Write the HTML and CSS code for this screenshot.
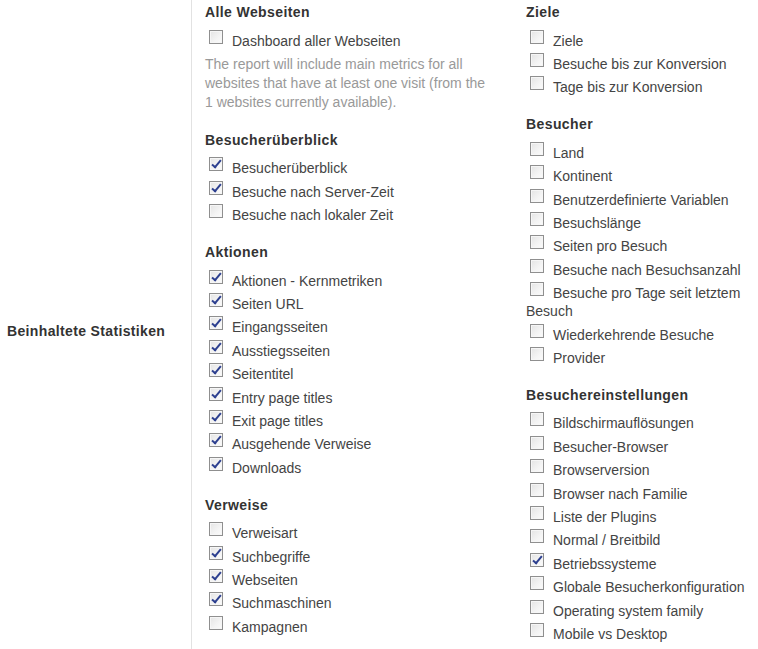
FILE: index.html
```
<!DOCTYPE html>
<html lang="de">
 <head>
  <meta charset="UTF-8" />
  <meta name="viewport" content="width=device-width, initial-scale=1.0" />
  <title>Beinhaltete Statistiken</title>
  <link rel="stylesheet" href="styles.css">
 </head>
 <body>
  <div class="report-row">
   <div class="row-label">Beinhaltete Statistiken</div>
   <div class="row-content">
    <!-- left column -->
    <div class="stats-col">
     <div class="group">
      <h3>Alle Webseiten</h3>
      <label class="item"><span class="box"></span>Dashboard aller Webseiten</label>
      <p class="hint">The report will include main metrics for all websites that have at least one visit (from the 1 websites currently available).</p>
     </div>
     <div class="group">
      <h3>Besucherüberblick</h3>
      <label class="item"><span class="box checked"></span>Besucherüberblick</label>
      <label class="item"><span class="box checked"></span>Besuche nach Server-Zeit</label>
      <label class="item"><span class="box"></span>Besuche nach lokaler Zeit</label>
     </div>
     <div class="group">
      <h3>Aktionen</h3>
      <label class="item"><span class="box checked"></span>Aktionen - Kernmetriken</label>
      <label class="item"><span class="box checked"></span>Seiten URL</label>
      <label class="item"><span class="box checked"></span>Eingangsseiten</label>
      <label class="item"><span class="box checked"></span>Ausstiegsseiten</label>
      <label class="item"><span class="box checked"></span>Seitentitel</label>
      <label class="item"><span class="box checked"></span>Entry page titles</label>
      <label class="item"><span class="box checked"></span>Exit page titles</label>
      <label class="item"><span class="box checked"></span>Ausgehende Verweise</label>
      <label class="item"><span class="box checked"></span>Downloads</label>
     </div>
     <div class="group">
      <h3>Verweise</h3>
      <label class="item"><span class="box"></span>Verweisart</label>
      <label class="item"><span class="box checked"></span>Suchbegriffe</label>
      <label class="item"><span class="box checked"></span>Webseiten</label>
      <label class="item"><span class="box checked"></span>Suchmaschinen</label>
      <label class="item"><span class="box"></span>Kampagnen</label>
     </div>
    </div>
    <!-- right column -->
    <div class="stats-col">
     <div class="group">
      <h3>Ziele</h3>
      <label class="item"><span class="box"></span>Ziele</label>
      <label class="item"><span class="box"></span>Besuche bis zur Konversion</label>
      <label class="item"><span class="box"></span>Tage bis zur Konversion</label>
     </div>
     <div class="group">
      <h3>Besucher</h3>
      <label class="item"><span class="box"></span>Land</label>
      <label class="item"><span class="box"></span>Kontinent</label>
      <label class="item"><span class="box"></span>Benutzerdefinierte Variablen</label>
      <label class="item"><span class="box"></span>Besuchslänge</label>
      <label class="item"><span class="box"></span>Seiten pro Besuch</label>
      <label class="item"><span class="box"></span>Besuche nach Besuchsanzahl</label>
      <label class="item"><span class="box"></span>Besuche pro Tage seit letztem Besuch</label>
      <label class="item"><span class="box"></span>Wiederkehrende Besuche</label>
      <label class="item"><span class="box"></span>Provider</label>
     </div>
     <div class="group">
      <h3>Besuchereinstellungen</h3>
      <label class="item"><span class="box"></span>Bildschirmauflösungen</label>
      <label class="item"><span class="box"></span>Besucher-Browser</label>
      <label class="item"><span class="box"></span>Browserversion</label>
      <label class="item"><span class="box"></span>Browser nach Familie</label>
      <label class="item"><span class="box"></span>Liste der Plugins</label>
      <label class="item"><span class="box"></span>Normal / Breitbild</label>
      <label class="item"><span class="box checked"></span>Betriebssysteme</label>
      <label class="item"><span class="box"></span>Globale Besucherkonfiguration</label>
      <label class="item"><span class="box"></span>Operating system family</label>
      <label class="item"><span class="box"></span>Mobile vs Desktop</label>
     </div>
    </div>
   </div>
  </div>
 </body>
</html>
```
FILE: styles.css
```
body {
 margin: 0;
 font-family: "Liberation Sans", Arial, sans-serif;
 font-size: 14px;
 color: #444;
 background: #fff;
}
.report-row {
 display: grid;
 grid-template-columns: 192px 1fr;
}
.row-label {
 display: flex;
 align-items: center;
 padding: 0 0 0 7px;
 font-weight: bold;
 letter-spacing: 0.35px;
 color: #333;
 border-right: 1px solid #e2e2e2;
}
.row-content {
 display: grid;
 grid-template-columns: 321px 1fr;
 padding: 3px 0 0 13px;
}
.group {
 margin-bottom: 19px;
}
.group h3 {
 margin: 0 0 10.5px 0;
 font-size: 14px;
 line-height: 18px;
 letter-spacing: 0.4px;
 color: #333;
}
.item {
 display: block;
 line-height: 18px;
 margin-bottom: 5.4px;
 cursor: pointer;
}
.box {
 display: inline-block;
 box-sizing: border-box;
 width: 14px;
 height: 14px;
 margin: -4px 9px 0 4px;
 vertical-align: 2px;
 border: 1px solid #8f8f8f;
 background: linear-gradient(135deg, #e4e4e4 0%, #f4f4f4 60%, #fbfbfb 100%);
 box-shadow: inset 0 0 0 1px #f6f6f6;
 position: relative;
}
.box.checked::after {
 content: "";
 position: absolute;
 left: 4px;
 top: 0px;
 width: 3px;
 height: 8px;
 border: solid #2c3f8f;
 border-width: 0 2px 2px 0;
 transform: rotate(40deg);
}
.hint {
 margin: 0 0 5px 0;
 width: 290px;
 line-height: 19px;
 color: #999;
}
```
